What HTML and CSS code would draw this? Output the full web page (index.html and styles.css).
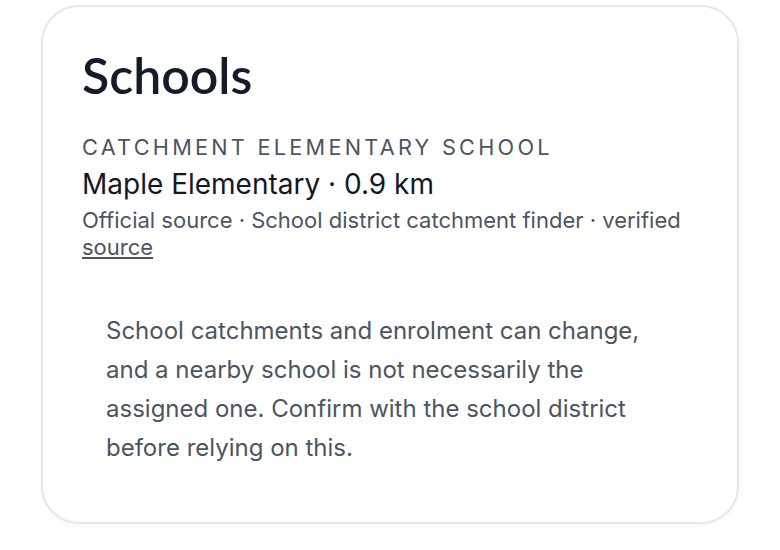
FILE: index.html
```html
<!DOCTYPE html>
<html lang="en">
  <head>
    <meta charset="UTF-8" />
    <meta name="viewport" content="width=device-width, initial-scale=1.0" />
    <title>Schools</title>
    <link rel="stylesheet" href="styles.css">
  </head>
  <body>
    <section class="card">
      <h2 class="card-title">Schools</h2>

      <div class="school">
        <div class="school-label">Catchment elementary school</div>
        <div class="school-name">Maple Elementary · 0.9 km</div>
        <div class="school-source">
          Official source · School district catchment finder · verified
          <a href="#">source</a>
        </div>
      </div>

      <p class="note">
        School catchments and enrolment can change, and a nearby school is
        not necessarily the assigned one. Confirm with the school district
        before relying on this.
      </p>
    </section>
  </body>
</html>
```

FILE: styles.css
```css
body {
  margin: 0;
  padding: 5px 41px;
  font-family: Inter, 'Noto Sans', sans-serif;
  color: #111827;
  background: #fff;
}
/* Card */
.card {
  border: 2px solid #e5e7eb;
  border-radius: 38px;
  padding: 40px 39px 55px;
  box-shadow: 0 2px 4px rgba(17, 24, 39, 0.04);
}
.card-title {
  margin: 0 0 30px;
  font-family: Lato, sans-serif;
  font-size: 50px;
  font-weight: 600;
  line-height: 56px;
  color: #141b2b;
}
/* School entry */
.school-label {
  font-size: 21.7px;
  letter-spacing: 0.15em;
  text-transform: uppercase;
  color: #4b5563;
  line-height: 28px;
}
.school-name {
  margin-top: 5px;
  font-size: 28px;
  line-height: 36px;
  color: #111827;
}
.school-source {
  margin-top: 5px;
  font-size: 22px;
  line-height: 27px;
  color: #4b5563;
}
.school-source a {
  color: #4b5563;
}
/* Disclaimer */
.note {
  margin: 50px 0 0;
  padding: 0 24px;
  font-size: 24px;
  line-height: 39px;
  color: #4b5563;
}
```
